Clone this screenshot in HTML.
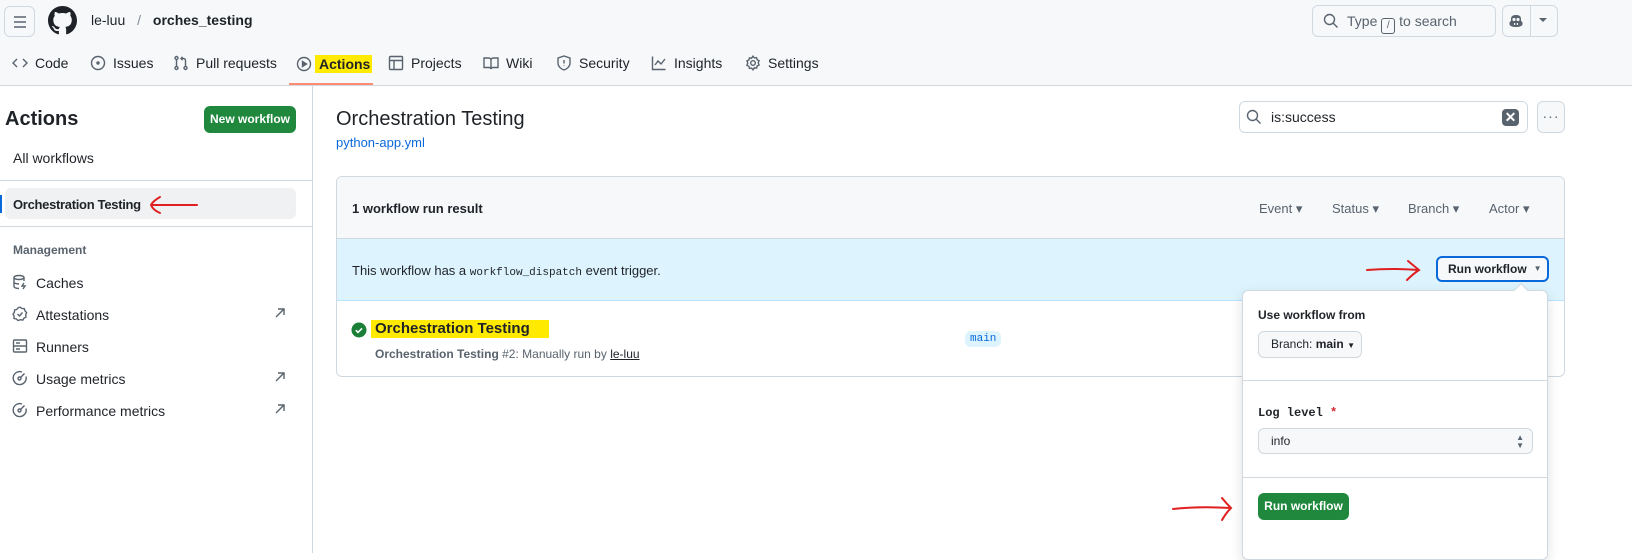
<!DOCTYPE html>
<html><head><meta charset="utf-8"><style>
*{box-sizing:border-box;margin:0;padding:0}
body{width:1632px;height:553px;overflow:hidden;background:#fff;font-family:"Liberation Sans",sans-serif;color:#1f2328;font-size:14px;position:relative;white-space:nowrap}
.a{position:absolute}
.hdr{left:0;top:0;width:1632px;height:86px;background:#f6f8fa;border-bottom:1px solid #d1d9e0}
.tab{position:absolute;top:55px;font-size:14px;color:#1f2328;display:flex;align-items:center;gap:7px}
svg{display:block}
.ic{stroke:#59636e;fill:none;stroke-width:1.4}
.btn{border:1px solid #d1d9e0;border-radius:6px;background:#f6f8fa}
.side{font-size:14px;color:#1f2328}
.red{stroke:#e02020;stroke-width:2;fill:none;stroke-linecap:round}
</style></head><body>
<div class="a hdr"></div>
<div class="a btn" style="left:4px;top:6px;width:31px;height:31px"></div>
<svg class="a" style="left:12px;top:14px" width="16" height="16"><path d="M2 3h12M2 8h12M2 13h12" stroke="#59636e" stroke-width="1.5"/></svg>
<svg class="a" style="left:48px;top:6px" width="29" height="29" viewBox="0 0 16 16"><path fill="#1f2328" d="M8 0C3.580 0 0 3.58 0 8c0 3.54 2.29 6.53 5.470 7.59.4.07.55-.17.55-.38 0-.19-.01-.82-.01-1.49-2.01.37-2.53-.49-2.69-.94-.09-.23-.48-.94-.82-1.13-.28-.15-.68-.52-.01-.53.63-.01 1.08.58 1.23.82.72 1.21 1.87.87 2.33.66.07-.52.28-.87.51-1.07-1.78-.2-3.64-.89-3.64-3.95 0-.87.31-1.59.82-2.15-.08-.2-.36-1.02.08-2.12 0 0 .67-.21 2.2.82.64-.18 1.32-.27 2-.27.68 0 1.36.09 2 .27 1.53-1.04 2.2-.82 2.2-.82.44 1.1.16 1.92.08 2.12.51.56.82 1.27.82 2.15 0 3.07-1.87 3.75-3.65 3.95.29.25.54.73.54 1.48 0 1.07-.01 1.93-.01 2.2 0 .21.15.46.55.38A8.013 8.013 0 0016 8c0-4.420-3.58-8-8-8z"/></svg>
<div class="a" style="left:91px;top:12px;font-size:14px">le-luu <span style="color:#818b98;margin:0 8px">/</span> <b style="font-weight:600">orches_testing</b></div>
<div class="a btn" style="left:1312px;top:5px;width:184px;height:32px;background:#f6f8fa"></div>
<svg class="a ic" style="left:1323px;top:13px" width="16" height="16"><circle cx="6.5" cy="6.5" r="5"/><path d="M10 10l4.5 4.5"/></svg>
<div class="a" style="left:1347px;top:13px;color:#59636e;font-size:14px">Type <span style="display:inline-block;border:1px solid #59636e;border-radius:3px;width:14px;height:16px;font-size:10px;text-align:center;line-height:14px;vertical-align:-2px">/</span> to search</div>
<div class="a btn" style="left:1502px;top:5px;width:56px;height:32px"></div>
<div class="a" style="left:1530px;top:5px;width:1px;height:32px;background:#d1d9e0"></div>
<svg class="a" style="left:1508px;top:13px" width="16" height="16" viewBox="0 0 16 16"><path fill="#59636e" d="M3 6c0-3 2-4 5-4s5 1 5 4v2c1 .5 1.5 1 1.5 2v1c0 2-3 3-6.5 3S1.5 13 1.5 11v-1c0-1 .5-1.5 1.5-2z"/><rect x="4.5" y="5" width="3" height="3" rx="1" fill="#f6f8fa"/><rect x="8.5" y="5" width="3" height="3" rx="1" fill="#f6f8fa"/><rect x="6" y="10" width="1.2" height="2" fill="#f6f8fa"/><rect x="8.8" y="10" width="1.2" height="2" fill="#f6f8fa"/></svg>
<svg class="a" style="left:1539px;top:18px" width="8" height="5"><path d="M0 0h8L4 4z" fill="#59636e"/></svg>

<div class="tab" style="left:12px"><svg class="ic" width="16" height="16"><path d="M5 4L1 8l4 4M11 4l4 4-4 4"/></svg>Code</div>
<div class="tab" style="left:90px"><svg class="ic" width="16" height="16"><circle cx="8" cy="8" r="6.5"/><circle cx="8" cy="8" r="1" fill="#59636e"/></svg>Issues</div>
<div class="tab" style="left:173px"><svg class="ic" width="16" height="16"><circle cx="3.5" cy="3" r="1.5"/><circle cx="3.5" cy="13" r="1.5"/><circle cx="12.5" cy="13" r="1.5"/><path d="M3.5 4.5v7M12.5 11.5V5.5a2 2 0 00-2-2H8M9.5 1.8L8 3.5l1.5 1.7"/></svg>Pull requests</div>
<div class="tab" style="left:296px"><svg class="ic" width="16" height="16"><circle cx="8" cy="8" r="6.5"/><path d="M6.5 5.5v5l4-2.5z" fill="#59636e"/></svg><span style="background:#ffea00;font-weight:600;padding:1px 2px 1px 2px;margin-left:-4px;padding-left:4px">Actions</span></div>
<div class="a" style="left:289px;top:83px;width:84px;height:2px;background:#fd8c73"></div>
<div class="tab" style="left:388px"><svg class="ic" width="16" height="16"><rect x="1.5" y="1.5" width="13" height="13" rx="1"/><path d="M1.5 5.5h13M6 5.5v9"/></svg>Projects</div>
<div class="tab" style="left:483px"><svg class="ic" width="16" height="16"><path d="M1 3h4.5a2.5 2 0 012.5 2v9a2 2 0 00-2-1.5H1zM15 3h-4.5A2.5 2 0 008 5v9a2 2 0 012-1.5h5z"/></svg>Wiki</div>
<div class="tab" style="left:556px"><svg class="ic" width="16" height="16"><path d="M8 1l6 2v5c0 3.5-3 6-6 7-3-1-6-3.5-6-7V3z"/><path d="M8 5v3.5M8 10.5v.5"/></svg>Security</div>
<div class="tab" style="left:651px"><svg class="ic" width="16" height="16"><path d="M1.5 1.5v13h13M4 10l3-4 3 3 4-5"/></svg>Insights</div>
<div class="tab" style="left:745px"><svg class="ic" width="16" height="16"><circle cx="8" cy="8" r="2.3"/><path d="M8 1.2l1.4 1.7 2.2-.3.5 2.1 2 1-.9 2 .9 2.3-2 1-.5 2.1-2.2-.3L8 14.8l-1.4-1.7-2.2.3-.5-2.1-2-1 .9-2.3-.9-2 2-1 .5-2.1 2.2.3z"/></svg>Settings</div>

<!-- sidebar -->
<div class="a" style="left:312px;top:86px;width:1px;height:467px;background:#d1d9e0"></div>
<div class="a" style="left:5px;top:108px;font-size:20px;font-weight:700">Actions</div>
<div class="a" style="left:204px;top:106px;width:92px;height:27px;background:#1f883d;border-radius:6px;color:#fff;font-size:12px;font-weight:700;text-align:center;line-height:27px">New workflow</div>
<div class="a side" style="left:13px;top:150px">All workflows</div>
<div class="a" style="left:0;top:180px;width:312px;height:1px;background:#d1d9e0"></div>
<div class="a" style="left:5px;top:188px;width:291px;height:31px;background:#eff1f3;border-radius:6px"></div>
<div class="a" style="left:0;top:195px;width:2px;height:18px;background:#0969da"></div>
<div class="a side" style="left:13px;top:197px;font-weight:700;font-size:13px;letter-spacing:-0.3px">Orchestration Testing</div>
<svg class="a" style="left:148px;top:194px" width="52" height="22"><path class="red" d="M3 11h46M12 3Q5 7 3 11q2 5 9 8"/></svg>
<div class="a" style="left:0;top:226px;width:312px;height:1px;background:#d1d9e0"></div>
<div class="a" style="left:13px;top:243px;font-size:12px;color:#59636e;font-weight:600">Management</div>
<svg class="a ic" style="left:12px;top:274px" width="16" height="16"><ellipse cx="7" cy="3.5" rx="5" ry="2"/><path d="M2 3.5v9c0 1 2 2 5 2M12 3.5V7M2 8c0 1 2 2 5 2M12 9l-2 3h3l-2 3"/></svg>
<div class="a side" style="left:36px;top:275px">Caches</div>
<svg class="a ic" style="left:12px;top:306px" width="16" height="16"><path d="M8 1.2l2 1.3 2.3.2.7 2.2 1.6 1.7-.9 2.1.3 2.3-2 1.1-1.2 2-2.3-.4L6 14.5 4.3 13l-2.3-.5.1-2.3L1 8.1l1.4-1.8.2-2.3L4.9 3.4 6.3 1.6z"/><path d="M5.5 8l2 2 3-3.5"/></svg>
<div class="a side" style="left:36px;top:307px">Attestations</div>
<svg class="a ic" style="left:274px;top:307px" width="12" height="12"><path d="M2 10l8-8M4 2h6v6"/></svg>
<svg class="a ic" style="left:12px;top:338px" width="16" height="16"><rect x="1.5" y="2" width="13" height="12" rx="1"/><path d="M1.5 8h13M4 5h4M4 11h4"/></svg>
<div class="a side" style="left:36px;top:339px">Runners</div>
<svg class="a ic" style="left:12px;top:370px" width="16" height="16"><path d="M10 2A6.5 6.5 0 1014 6.5"/><circle cx="7.5" cy="8.5" r="1.5"/><path d="M8.5 7.5l4-4"/></svg>
<div class="a side" style="left:36px;top:371px">Usage metrics</div>
<svg class="a ic" style="left:274px;top:371px" width="12" height="12"><path d="M2 10l8-8M4 2h6v6"/></svg>
<svg class="a ic" style="left:12px;top:402px" width="16" height="16"><path d="M10 2A6.5 6.5 0 1014 6.5"/><circle cx="7.5" cy="8.5" r="1.5"/><path d="M8.5 7.5l4-4"/></svg>
<div class="a side" style="left:36px;top:403px">Performance metrics</div>
<svg class="a ic" style="left:274px;top:403px" width="12" height="12"><path d="M2 10l8-8M4 2h6v6"/></svg>

<!-- main -->
<div class="a" style="left:336px;top:108px;font-size:20px">Orchestration Testing</div>
<div class="a" style="left:336px;top:135px;font-size:13px;color:#0969da">python-app.yml</div>
<div class="a" style="left:1239px;top:101px;width:289px;height:32px;border:1px solid #d1d9e0;border-radius:6px"></div>
<svg class="a ic" style="left:1246px;top:109px" width="16" height="16"><circle cx="6.5" cy="6.5" r="5"/><path d="M10 10l4.5 4.5"/></svg>
<div class="a" style="left:1271px;top:109px;font-size:14px">is:success</div>
<div class="a" style="left:1502px;top:109px;width:17px;height:17px;background:#59636e;border-radius:4px;color:#fff;font-size:14px;text-align:center;line-height:17px;font-weight:700">✕</div>
<div class="a btn" style="left:1537px;top:101px;width:28px;height:32px;text-align:center;line-height:28px;color:#59636e;letter-spacing:1px">···</div>

<div class="a" style="left:336px;top:176px;width:1229px;height:201px;border:1px solid #d1d9e0;border-radius:6px;overflow:hidden">
 <div style="height:62px;background:#f6f8fa;border-bottom:1px solid #d1d9e0;position:relative">
  <div class="a" style="left:15px;top:24px;font-size:13px;font-weight:600">1 workflow run result</div>
  <div class="a" style="left:922px;top:24px;font-size:13px;color:#59636e">Event ▾</div>
  <div class="a" style="left:995px;top:24px;font-size:13px;color:#59636e">Status ▾</div>
  <div class="a" style="left:1071px;top:24px;font-size:13px;color:#59636e">Branch ▾</div>
  <div class="a" style="left:1152px;top:24px;font-size:13px;color:#59636e">Actor ▾</div>
 </div>
 <div style="height:62px;background:#ddf4ff;border-bottom:1px solid #b6e3ff;position:relative">
  <div class="a" style="left:15px;top:24px;font-size:13px">This workflow has a <code style="font-family:'Liberation Mono',monospace;font-size:11px">workflow_dispatch</code> event trigger.</div>
 </div>
</div>
<svg class="a" style="left:351px;top:322px" width="16" height="16"><circle cx="8" cy="8" r="7.5" fill="#1a7f37"/><path d="M4.8 8.2l2.2 2.2 4-4" stroke="#fff" stroke-width="1.6" fill="none"/></svg>
<div class="a" style="left:371px;top:320px;width:178px;height:18px;background:#ffea00"></div>
<div class="a" style="left:375px;top:320px;font-size:15px;font-weight:600">Orchestration Testing</div>
<div class="a" style="left:375px;top:347px;font-size:12px;color:#59636e"><b style="font-weight:600">Orchestration Testing</b> #2: Manually run by <span style="text-decoration:underline;color:#1f2328">le-luu</span></div>
<div class="a" style="left:965px;top:331px;background:#ddf4ff;color:#0969da;font-family:'Liberation Mono',monospace;font-size:11px;padding:2px 5px;border-radius:6px">main</div>

<svg class="a" style="left:1365px;top:258px" width="60" height="26"><path class="red" d="M2 12q25-2 52 0M43 3q6 5 11 9q-6 4-12 10"/></svg>
<div class="a" style="left:1436px;top:256px;width:113px;height:26px;border:2px solid #0969da;border-radius:6px;background:#f6f8fa;font-size:12px;font-weight:600;line-height:22px;padding-left:10px;display:flex;align-items:center">Run workflow<span style="font-size:8px;margin-left:7px;color:#59636e">▼</span></div>

<div class="a" style="left:1242px;top:290px;width:306px;height:270px;background:#fff;border:1px solid #d1d9e0;border-radius:6px;box-shadow:0 4px 12px rgba(0,0,0,.12)">
 <div class="a" style="left:15px;top:17px;font-size:12px;font-weight:600">Use workflow from</div>
 <div class="a btn" style="left:15px;top:40px;width:104px;height:27px;font-size:12px;line-height:25px;padding-left:12px">Branch: <b>main</b> <span style="font-size:8px">▼</span></div>
 <div class="a" style="left:0;top:89px;width:304px;height:1px;background:#d1d9e0"></div>
 <div class="a" style="left:15px;top:115px;font-family:'Liberation Mono',monospace;font-size:12px;font-weight:700">Log level <span style="color:#d1242f">*</span></div>
 <div class="a btn" style="left:15px;top:137px;width:275px;height:26px;font-size:12px;line-height:24px;padding-left:12px">info<span style="position:absolute;right:8px;top:0;font-size:8px;line-height:8px;padding-top:5px;color:#59636e;white-space:normal">▲<br>▼</span></div>
 <div class="a" style="left:0;top:186px;width:304px;height:1px;background:#d1d9e0"></div>
 <div class="a" style="left:15px;top:202px;width:91px;height:27px;background:#1f883d;border-radius:6px;color:#fff;font-size:12px;font-weight:700;text-align:center;line-height:27px">Run workflow</div>
</div>
<div class="a" style="left:1516px;top:285px;width:10px;height:10px;background:#fff;transform:rotate(45deg);border-left:1px solid #d1d9e0;border-top:1px solid #d1d9e0"></div>
<svg class="a" style="left:1170px;top:495px" width="70" height="28"><path class="red" d="M3 14q25-3 58-1M52 3q4 5 9 10q-5 5-9 12"/></svg>
</body></html>
